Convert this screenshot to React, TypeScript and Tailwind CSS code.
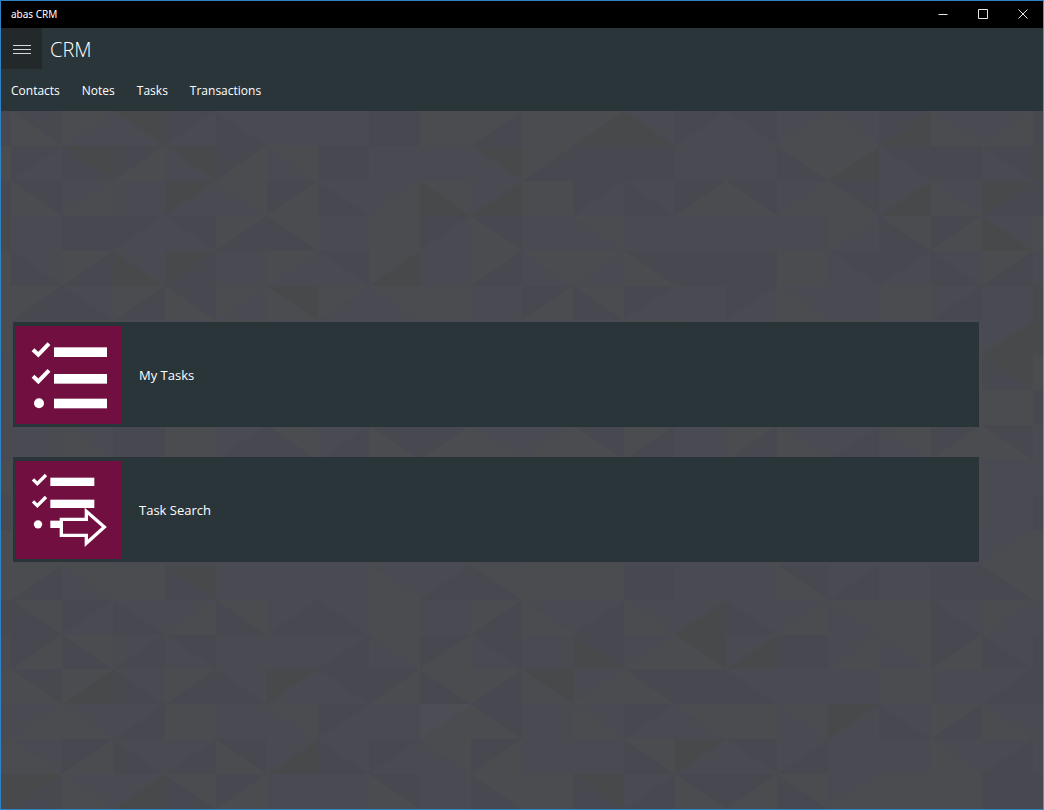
import React from "react";

/*
 * Triangle mosaic. Every cell is "<diagonal><left colour><right colour>":
 * "/" runs from bottom left to top right, "\" from top left to bottom right.
 */
const MOSAIC: string[] = [
  "\\gB /gb \\bG /Bb \\Bb /bb /bb /BB /gg /gB /gg /gG \\Gb /Bb \\bB /bg \\gb /BG \\gb /bg",
  "/Bb \\BG /Bg \\bG /Bg \\bg /BB /bb /bb \\bG /gB /BB /BB /bb /bb \\Bg /gG \\bB /BB \\bB",
  "\\gB /bg /bb /Gb \\bg /Bg \\Bb /bg \\Gg /bG /gg /Bb \\Bb /Bg \\gB /bg \\gB /bG \\gb /GB",
  "/bb /BB /Bb \\bB /gB \\Bg /bb /gg /Bb \\gB /bb \\bg /bb /bb /bb /bb /gb \\Bg /Bg \\Gb",
  "\\Bb /gB \\Gb /GB /bb /gb \\bB /gG \\bb /gB \\bg /gb \\gB /BB /BB /gg \\bB /Bb \\Bb /gB",
  "/gB \\Bb /gB \\gB /gb \\gG /gb \\bg /gg /bb /Bg \\Bg /Bb /bb /Bb \\gb /bb /gg /bB /bb",
  "/bb /gg /bb /bb /gg /bb /bb /bb /bb /bb /bb /bb /gg /bb /bb /gg /gg /bb /bb /bG",
  "/bb /bb /bb /bb /bb /bb /bb /bb /bb /bb /bb /bb /bb /bb /bb /bb /bb /bb /gg \\BG",
  "/bb /bb /bb /bb /bb /bb /bb /bb /bb /bb /bb /bb /bb /bb /bb /bb /bb /bb /gg /gg",
  "/bb \\gb /BB /gg /bB \\Bg /bB \\gB /Bg \\gb /bg \\gB /gB /bb /gB \\gb /bB \\bg /Bg \\gB",
  "/bb /bb /bb /bb /bb /bb /bb /bb /bb /bb /bb /bb /bb /bb /bb /bb /bb /bb /gg /bb",
  "/bb /bb /bb /bb /bb /bb /bb /bb /bb /bb /bb /bb /bb /bb /bb /bb /bb /bb /gg \\bb",
  "/gg /gg /bb /bb /bb /bb /bb /bb /bb /bb /gg /gg /bb /bb /bb /bb /bb /bb /bb /bg",
  "/gB \\bg /gg \\BG /bb /bb /bb \\gb /bB \\Bg /gg /gg /BB /bb /bb \\gB /bB /bb /BB \\Bg",
  "\\Bg /Bb \\Bb /bg \\Bg /bB \\Bb /gg /bb /gB \\gb /bB \\gb /bG \\Bb /bg \\bg /gg \\Bb /gb",
  "/Bg \\Bg /bB \\bB /bb /bb /bB \\bg /Bg \\bB /bb \\GB /bg \\gG /bG /BB /bg \\bg /Bg \\Bb",
  "\\gB /gG \\Bb /gB \\Bb /Gb \\bB /Bg \\Bg /gB \\gG /bg \\gB /BB \\Bb /bb /bb /gg /bb /bB",
  "/bg \\gb /bB /gg /bb \\bg /Bb /bb /pg \\gB /bb \\gb /Bb \\bg /gg \\bg /Gb \\Bb /gB \\gb",
  "\\gb /Bg \\Bb /bB \\gB /bG \\Bb /Bb \\bg /Bg /bb /bb \\Bg /Gb \\bB /bB /bb /bb \\gb /bB",
  "/GB \\gb /bG \\Bg /Bg /bb /bb \\gB /bb \\Bg /gg \\BG /bB \\gB /Bg \\Bg /bg /gg /gg /BB",
];

const TONES: Record<string, string> = {
  g: "#4b4c50",
  G: "#48494b",
  b: "#4a4a52",
  B: "#484850",
  p: "#4d4d55",
};

const COL_W = 51.07;
const ROW_H = 34.9;
const LEFT = 10.3;

const EDGE_LEFT = "BgBGgggbbbgBggBbgbgG";
const EDGE_RIGHT = "BGBgbGGgBbbBggbBBbbB";

function Mosaic() {
  return (
    <svg
      aria-hidden="true"
      className="absolute inset-0 h-full w-full"
      viewBox="0 0 1042 698"
      preserveAspectRatio="xMidYMid slice"
      shapeRendering="crispEdges"
    >
      <rect width="1042" height="698" fill="#4a4a52" />
      {MOSAIC.map((line, r) => {
        const y0 = r * ROW_H;
        const y1 = y0 + ROW_H;
        return (
          <g key={r}>
            <rect x="0" y={y0} width={LEFT} height={ROW_H} fill={TONES[EDGE_LEFT[r]]} />
            <rect x={LEFT + 20 * COL_W} y={y0} width="12" height={ROW_H} fill={TONES[EDGE_RIGHT[r]]} />
            {line.split(" ").map((cell, c) => {
              const x0 = LEFT + c * COL_W;
              const x1 = x0 + COL_W;
              const half =
                cell[0] === "/"
                  ? `${x1},${y0} ${x1},${y1} ${x0},${y1}`
                  : `${x0},${y0} ${x1},${y0} ${x1},${y1}`;
              return (
                <g key={c}>
                  <rect x={x0} y={y0} width={COL_W} height={ROW_H} fill={TONES[cell[1]]} />
                  {cell[1] !== cell[2] && <polygon points={half} fill={TONES[cell[2]]} />}
                </g>
              );
            })}
          </g>
        );
      })}
    </svg>
  );
}

function TaskListIcon() {
  return (
    <svg aria-hidden="true" viewBox="48 47 318 294" className="h-[98px] w-[106px]" fill="#fff">
      <g fill="none" stroke="#fff" strokeWidth="12">
        <path d="M99 118 L115 133 L147 100" />
        <path d="M99 198 L115 213 L147 180" />
      </g>
      <circle cx="117" cy="279" r="15" />
      <rect x="162" y="111" width="159" height="29" />
      <rect x="162" y="191" width="159" height="29" />
      <rect x="162" y="265" width="159" height="29" />
    </svg>
  );
}

function TaskSearchIcon() {
  return (
    <svg aria-hidden="true" viewBox="48 47 318 294" className="h-[98px] w-[106px]" fill="#fff">
      <g fill="none" stroke="#fff" strokeWidth="10">
        <path d="M99 102 L112 115 L138 89" />
        <path d="M99 168 L112 181 L138 155" />
      </g>
      <circle cx="114" cy="237" r="12.5" />
      <rect x="151" y="97" width="132" height="25" />
      <rect x="151" y="163" width="132" height="25" />
      <rect x="151" y="226" width="30" height="22" />
      <path
        d="M184 222 H259 V198 L313 245 L259 294 V270 H184 Z"
        fill="#720f41"
        stroke="#fff"
        strokeWidth="10"
      />
    </svg>
  );
}

function WindowButton({ label, children }: { label: string; children: React.ReactNode }) {
  return (
    <button type="button" aria-label={label} className="flex h-full w-10 items-center justify-center">
      <svg
        aria-hidden="true"
        viewBox="0 0 10 10"
        className="h-[10px] w-[10px] overflow-visible"
        fill="none"
        stroke="#e6e6e6"
      >
        {children}
      </svg>
    </button>
  );
}

function Tile({ label, icon }: { label: string; icon: React.ReactNode }) {
  return (
    <button
      type="button"
      className="flex h-[105px] w-full items-center gap-[17px] bg-[#2a353a] pl-[3px] text-left text-[13px] text-white"
    >
      <span className="bg-[#720f41]">{icon}</span>
      <span className="pt-[2px]">{label}</span>
    </button>
  );
}

const NAV = ["Contacts", "Notes", "Tasks", "Transactions"];

export default function App() {
  return (
    <div className="flex min-h-screen flex-col border border-[#2f82c4] border-r-[#4a97dc] bg-[#4a4a52] font-['Open_Sans','Noto_Sans',sans-serif] text-white">
      <div className="flex h-[27px] items-center justify-between bg-black pb-px pl-[10px]">
        <span className="font-['Noto_Sans',sans-serif] text-[10px]">abas CRM</span>
        <div className="flex h-full">
          <WindowButton label="Minimize">
            <path d="M0.5 5.5H9.5" />
          </WindowButton>
          <WindowButton label="Maximize">
            <path d="M0.5 0.5H9.5V9.5H0.5Z" />
          </WindowButton>
          <WindowButton label="Close">
            <path d="M0.5 0.5L9.5 9.5M9.5 0.5L0.5 9.5" />
          </WindowButton>
        </div>
      </div>

      <header className="bg-[#2a353a]">
        <div className="flex h-[41px] items-center gap-2">
          <button
            type="button"
            aria-label="Menu"
            className="flex h-full w-[41px] items-center justify-center bg-[#23292b] pt-[2px]"
          >
            <svg aria-hidden="true" viewBox="0 0 18 11" className="h-[11px] w-[18px]" stroke="#d5d7d8">
              <path d="M0 1.5H18M0 5.5H18M0 9.5H18" />
            </svg>
          </button>
          <h1 className="pt-[2px] text-xl font-light">CRM</h1>
        </div>
        <nav className="flex h-[42px] items-center gap-[22px] pl-[10px] pt-[2px] text-xs text-white">
          {NAV.map((item) => (
            <a key={item} href={`#${item.toLowerCase()}`}>
              {item}
            </a>
          ))}
        </nav>
      </header>

      <main className="relative grow overflow-hidden">
        <Mosaic />
        <div className="relative flex flex-col gap-[30px] pb-8 pl-3 pr-16 pt-[211px]">
          <Tile label="My Tasks" icon={<TaskListIcon />} />
          <Tile label="Task Search" icon={<TaskSearchIcon />} />
        </div>
      </main>
    </div>
  );
}
